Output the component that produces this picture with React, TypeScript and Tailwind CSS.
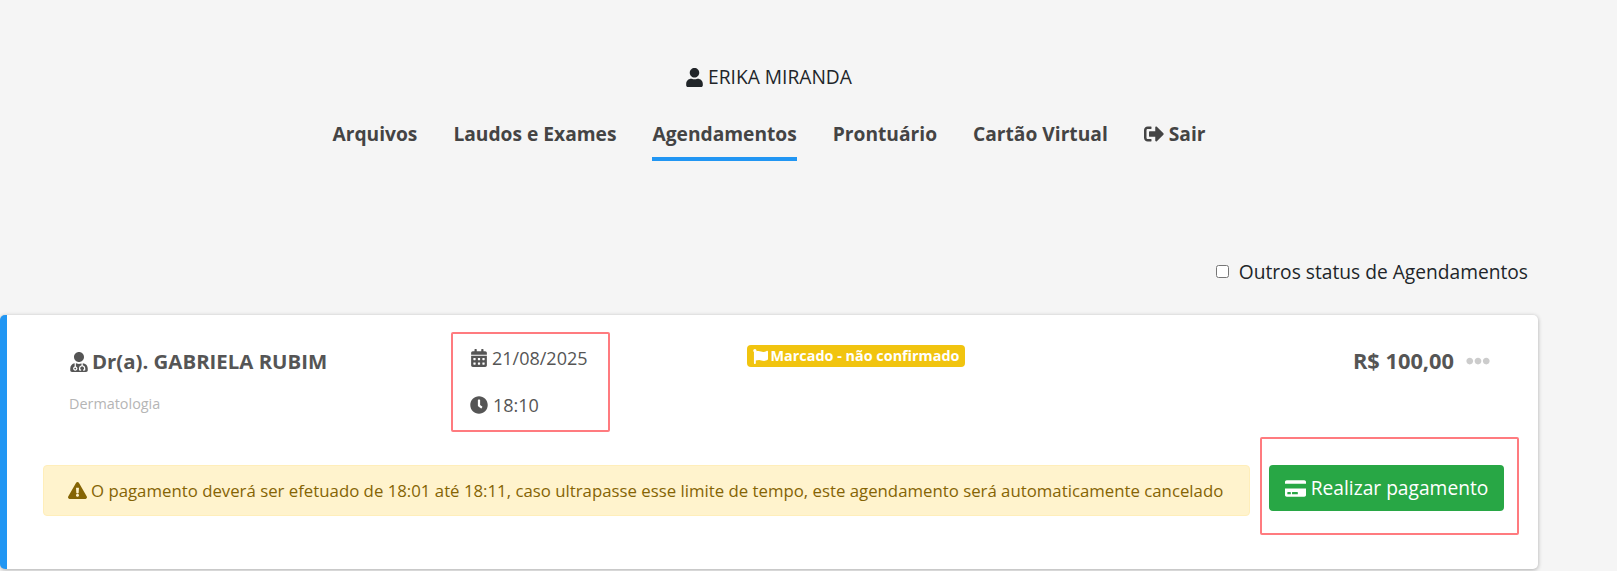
import { FaCalendarAlt, FaClock, FaCreditCard, FaEllipsisH, FaExclamationTriangle, FaFlag, FaSignOutAlt, FaUser, FaUserMd } from "react-icons/fa";

const navItems = ["Arquivos", "Laudos e Exames", "Agendamentos", "Prontuário", "Cartão Virtual"];

export default function App() {
    return (
        <div className="h-[571px] w-full overflow-hidden bg-[#f5f5f5] font-['Open_Sans',sans-serif]">
            <div className="flex flex-col items-center pt-[64px] pr-[80px]">
                <div className="flex items-center gap-[4px] text-[19.2px] leading-[26px] text-[#212529]">
                    <FaUser className="text-[19px]" />
                    <span>ERIKA MIRANDA</span>
                </div>
                <nav className="mt-[31px] flex gap-[36px] pl-[1px] text-[19.2px] font-bold leading-[25px] text-[#444]">
                    {navItems.map((item) => (
                        <div key={item} className={item === "Agendamentos" ? "h-[40px] border-b-4 border-[#2196f3]" : "h-[40px]"}>
                            {item}
                        </div>
                    ))}
                    <div className="flex h-[40px] items-start gap-[5px]">
                        <FaSignOutAlt className="mt-[3px] text-[20px]" />
                        <span>Sair</span>
                    </div>
                </nav>
            </div>

            <div className="mt-[98px] flex items-center justify-end gap-[10px] pr-[89px] text-[19.2px] leading-[25px] text-[#212529]">
                <input type="checkbox" className="h-[13px] w-[13px]" />
                <span>Outros status de Agendamentos</span>
            </div>

            <div className="mt-[31px] h-[254px] w-[1538px] rounded-[5px] border-l-[7px] border-[#2196f3] bg-white shadow-[0_1px_4px_rgba(0,0,0,0.3)]">
                <div className="flex h-[150px] items-start">
                    <div className="w-[444px] pt-[34px] pl-[62px]">
                        <div className="flex items-center gap-[3px] text-[20.4px] font-bold leading-[25px] text-[#555]">
                            <FaUserMd className="text-[20px]" />
                            <span>Dr(a). GABRIELA RUBIM</span>
                        </div>
                        <div className="mt-[21px] text-[14.4px] leading-[18px] text-[#b5b5b5]">Dermatologia</div>
                    </div>
                    <div className="mt-[17px] h-[100px] w-[159px] rounded-[2px] border-2 border-[#ff7b7f] pl-[17px] pt-[12px] text-[18px] text-[#555]">
                        <div className="flex items-center gap-[4px] leading-[24px]">
                            <FaCalendarAlt className="text-[18px]" />
                            <span>21/08/2025</span>
                        </div>
                        <div className="mt-[23px] flex items-center gap-[5px] leading-[24px]">
                            <FaClock className="text-[18px]" />
                            <span>18:10</span>
                        </div>
                    </div>
                    <div className="ml-[137px] mt-[30px] flex h-[22px] w-[218px] items-center justify-center gap-[3px] rounded-[4px] bg-[#f1c40f] text-[14.4px] font-bold text-white">
                        <FaFlag className="text-[15px]" />
                        <span>Marcado - não confirmado</span>
                    </div>
                    <div className="ml-auto mt-[32px] flex items-center gap-[12px] pr-[48px]">
                        <span className="text-[21.8px] font-bold leading-[27px] text-[#555]">R$ 100,00</span>
                        <FaEllipsisH className="text-[24px] text-[#ccc]" />
                    </div>
                </div>

                <div className="flex items-start pl-[36px]">
                    <div className="flex h-[51px] w-[1207px] items-center gap-[4px] rounded-[4px] border border-[#ffeeba] bg-[#fff3cd] px-[24px] text-[16.8px] whitespace-nowrap text-[#856404]">
                        <FaExclamationTriangle className="shrink-0 text-[19px]" />
                        <span>O pagamento deverá ser efetuado de 18:01 até 18:11, caso ultrapasse esse limite de tempo, este agendamento será automaticamente cancelado</span>
                    </div>
                    <div className="ml-[10px] mt-[-28px] h-[98px] w-[259px] rounded-[2px] border-2 border-[#ff7b7f] pl-[7px] pt-[26px]">
                        <button className="flex h-[46px] w-[235px] items-center justify-center gap-[5px] rounded-[4px] bg-[#28a745] text-[19.2px] text-white">
                            <FaCreditCard className="text-[21px]" />
                            <span>Realizar pagamento</span>
                        </button>
                    </div>
                </div>
            </div>
        </div>
    );
}
